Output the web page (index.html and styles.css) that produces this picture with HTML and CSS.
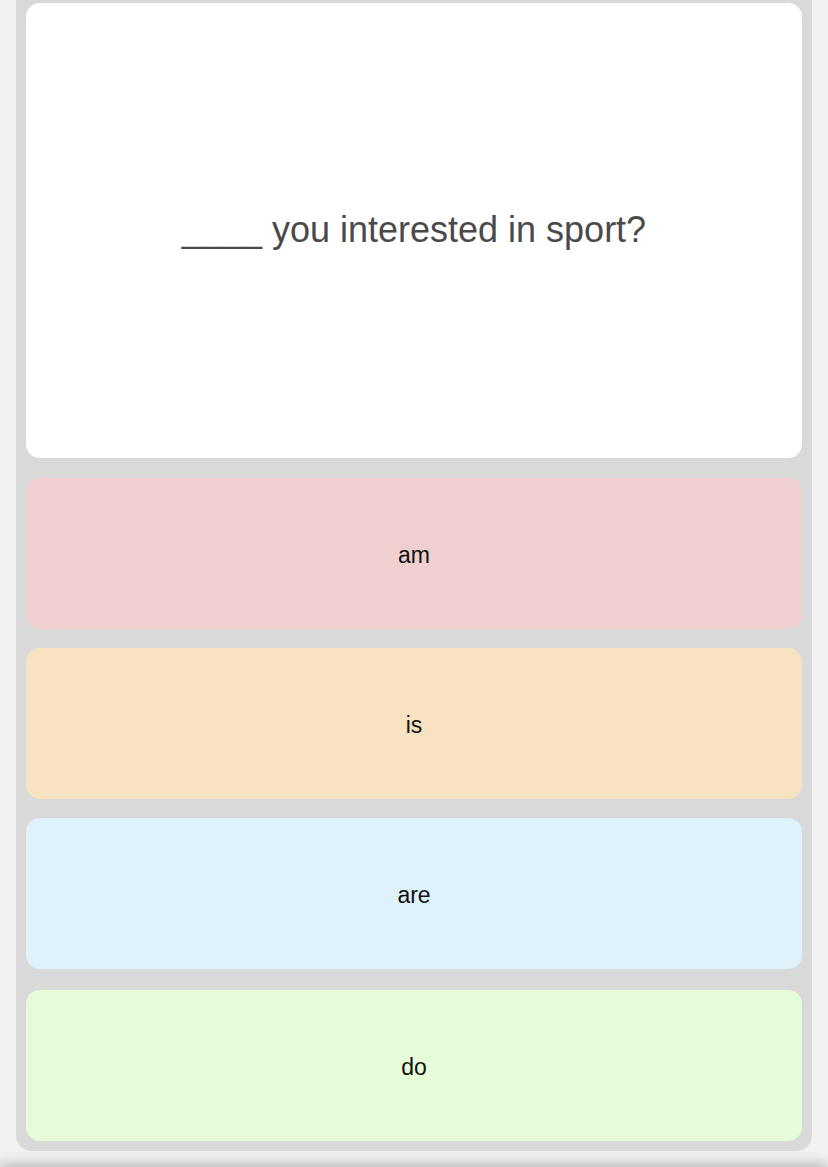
FILE: index.html
```html
<!DOCTYPE html>
<html>
<head>
<meta charset="utf-8">
<link rel="stylesheet" href="styles.css">
</head>
<body>
<main class="quiz">
  <section class="question">
    <p class="question-text"><span class="blank">____</span> you interested in sport?</p>
  </section>
  <button class="option option-pink">am</button>
  <button class="option option-orange">is</button>
  <button class="option option-blue">are</button>
  <button class="option option-green">do</button>
</main>
<footer class="bottom-bar"></footer>
</body>
</html>
```
FILE: styles.css
```css
html, body {
  margin: 0;
  padding: 0;
}
body {
  background: #f1f1f1;
  font-family: "Liberation Sans", Arial, Helvetica, sans-serif;
  overflow: hidden;
}
.quiz {
  margin: 0 16px;
  background: #d9d9d9;
  padding: 3px 10px 10px;
  border-radius: 0 0 16px 16px;
  display: flex;
  flex-direction: column;
  gap: 19px;
}
.question {
  background: #ffffff;
  border-radius: 14px;
  height: 455px;
  margin-bottom: 1px;
  display: flex;
  align-items: center;
  justify-content: center;
}
.question-text {
  margin: 0 0 2px;
  font-size: 36px;
  color: #4a4a4a;
}
.option {
  border: none;
  border-radius: 14px;
  height: 151px;
  font-family: "Liberation Sans", Arial, Helvetica, sans-serif;
  font-size: 23px;
  color: #111111;
  padding: 3px 0 0;
  display: flex;
  align-items: center;
  justify-content: center;
}
.option-pink { background: #efcfcf; }
.option-orange { background: #f7e3c2; }
.option-blue { background: #dff1fa; margin-bottom: 2px; }
.option-green { background: #e6fcd8; }
.bottom-bar {
  margin-top: 16px;
  height: 40px;
  background: #f1f1f1;
  box-shadow: 0 -2px 14px rgba(0, 0, 0, 0.28);
}
```
